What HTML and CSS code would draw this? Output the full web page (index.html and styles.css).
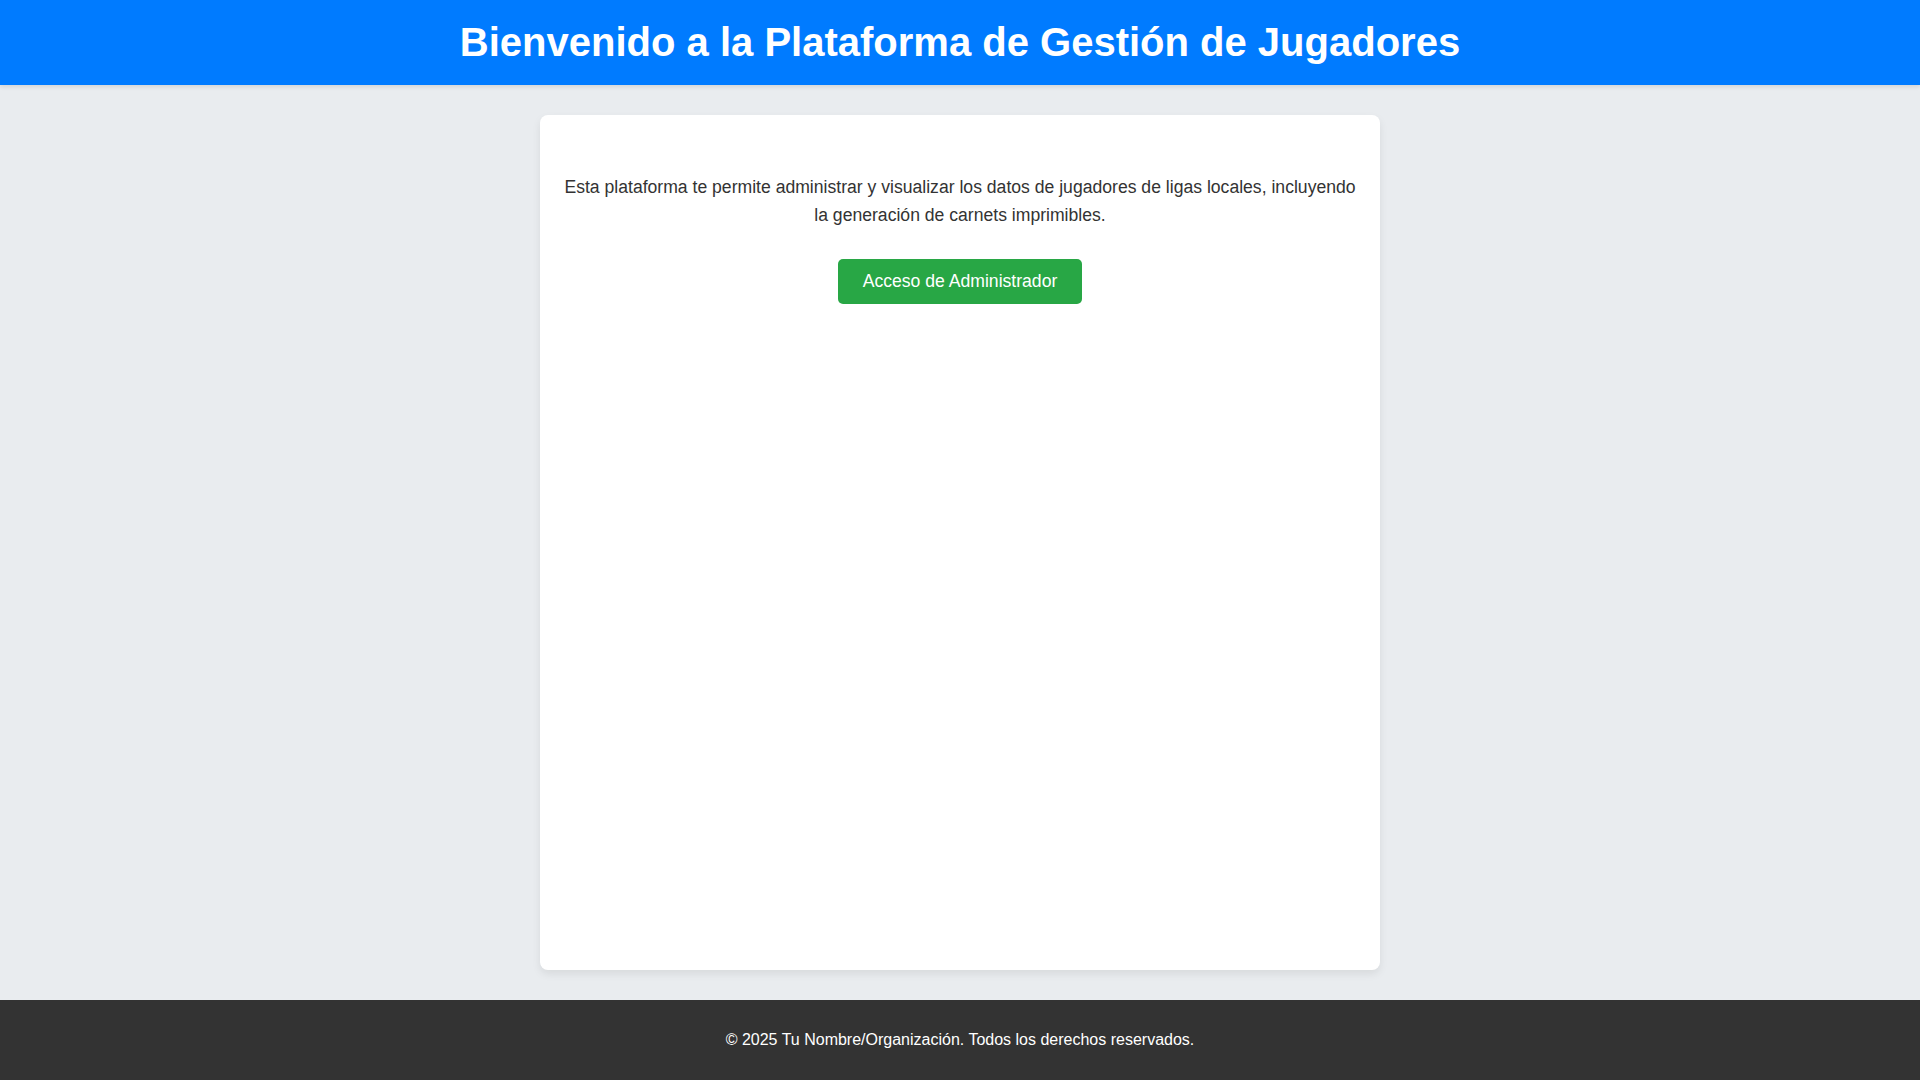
FILE: index.html
```html
<!DOCTYPE html>
<html lang="es">
<head>
<meta charset="utf-8">
<title>Plataforma de Gestión de Jugadores</title>
<link rel="stylesheet" href="styles.css">
</head>
<body>
<header class="site-header">
  <h1 class="site-title">Bienvenido a la Plataforma de Gestión de Jugadores</h1>
</header>
<main class="main">
  <section class="card">
    <p class="intro">Esta plataforma te permite administrar y visualizar los datos de jugadores de ligas locales, incluyendo la generación de carnets imprimibles.</p>
    <a class="btn" href="#">Acceso de Administrador</a>
  </section>
</main>
<footer class="site-footer">
  <p class="copy">© 2025 Tu Nombre/Organización. Todos los derechos reservados.</p>
</footer>
</body>
</html>
```

FILE: styles.css
```css
* { box-sizing: border-box; }
html, body { height: 100%; }
body {
  margin: 0;
  font-family: "Liberation Sans", Arial, sans-serif;
  background: #e9ecef;
  color: #333;
  display: flex;
  flex-direction: column;
  min-height: 100vh;
}
.site-header {
  background: #007bff;
  color: #fff;
  height: 85px;
  display: flex;
  align-items: center;
  justify-content: center;
  box-shadow: 0 2px 4px rgba(0,0,0,0.1);
}
.site-title {
  margin: 0;
  font-size: 40px;
  font-weight: bold;
}
.main {
  flex: 1;
  padding: 30px 0;
  display: flex;
  justify-content: center;
}
.card {
  width: 840px;
  background: #fff;
  border-radius: 8px;
  box-shadow: 0 4px 8px rgba(0,0,0,0.08);
  padding: 40px 20px;
  text-align: center;
}
.intro {
  margin: 18px 0 30px;
  font-size: 17.6px;
  line-height: 1.6;
}
.btn {
  display: inline-block;
  background: #28a745;
  color: #fff;
  text-decoration: none;
  font-size: 17.6px;
  padding: 12px 25px;
  border-radius: 5px;
}
.site-footer {
  background: #333;
  color: #fff;
  height: 80px;
  display: flex;
  align-items: center;
  justify-content: center;
}
.copy {
  margin: 0;
  font-size: 16px;
}
```
